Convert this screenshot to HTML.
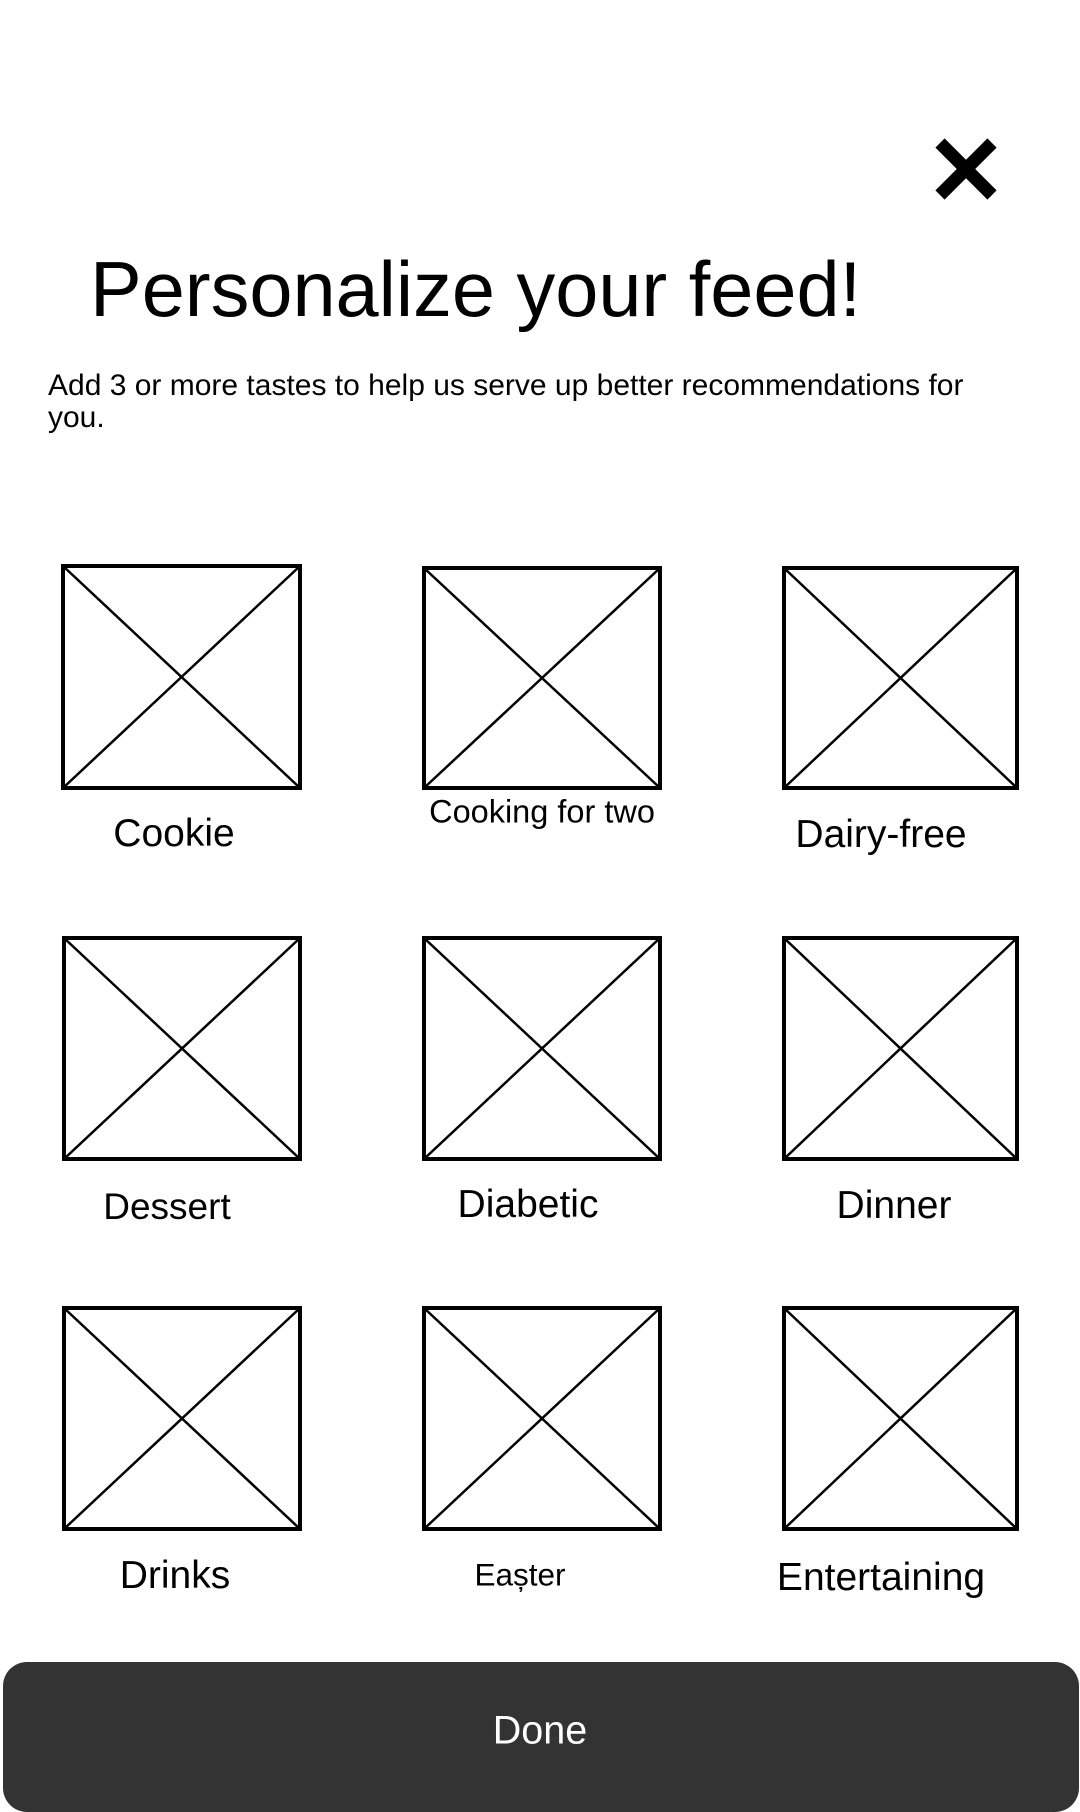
<!DOCTYPE html>
<html><head><meta charset="utf-8"><style>
html,body{margin:0;padding:0;background:#fff;}
body{width:1080px;height:1800px;position:relative;overflow:hidden;font-family:"Liberation Sans",Arial,sans-serif;color:#000;}
.a{position:absolute;}
.lbl{position:absolute;transform:translate(-50%,-50%);white-space:nowrap;font-size:39px;}
</style></head><body>
<svg class="a" style="left:932px;top:137px" width="68" height="64" viewBox="0 0 68 64"><path d="M8 6 L60 58 M60 6 L8 58" stroke="#000" stroke-width="13" stroke-linecap="butt"/></svg>
<div class="a" style="left:90px;top:246px;font-size:77.5px;line-height:88px;">Personalize your feed!</div>
<div class="a" style="left:48px;top:370px;font-size:30px;line-height:32px;width:960px;">Add 3 or more tastes to help us serve up better recommendations for you.</div>

<svg class="a" style="left:0;top:0" width="1080" height="1800">
<g fill="none" stroke="#000">
<g stroke-width="4"><rect x="63" y="566" width="237" height="222"/><rect x="424" y="568" width="236" height="220"/><rect x="784" y="568" width="233" height="220"/>
<rect x="64" y="938" width="236" height="221"/><rect x="424" y="938" width="236" height="221"/><rect x="784" y="938" width="233" height="221"/>
<rect x="64" y="1308" width="236" height="221"/><rect x="424" y="1308" width="236" height="221"/><rect x="784" y="1308" width="233" height="221"/></g>
<g stroke-width="2.5">
<path d="M63 566L300 788M300 566L63 788"/><path d="M424 568L660 788M660 568L424 788"/><path d="M784 568L1017 788M1017 568L784 788"/>
<path d="M64 938L300 1159M300 938L64 1159"/><path d="M424 938L660 1159M660 938L424 1159"/><path d="M784 938L1017 1159M1017 938L784 1159"/>
<path d="M64 1308L300 1529M300 1308L64 1529"/><path d="M424 1308L660 1529M660 1308L424 1529"/><path d="M784 1308L1017 1529M1017 1308L784 1529"/>
</g></g></svg>

<div class="lbl" style="left:174px;top:834px;">Cookie</div>
<div class="lbl" style="left:542px;top:812px;font-size:32.5px;">Cooking for two</div>
<div class="lbl" style="left:881px;top:835px;">Dairy-free</div>
<div class="lbl" style="left:167px;top:1207px;font-size:37px;">Dessert</div>
<div class="lbl" style="left:528px;top:1205px;">Diabetic</div>
<div class="lbl" style="left:894px;top:1206px;">Dinner</div>
<div class="lbl" style="left:175px;top:1576px;">Drinks</div>
<div class="lbl" style="left:520px;top:1575px;font-size:31.5px;">Eașter</div>
<div class="lbl" style="left:881px;top:1578px;">Entertaining</div>

<div class="a" style="left:3px;top:1662px;width:1076px;height:150px;background:#333;border-radius:24px;"></div>
<div class="lbl" style="left:540px;top:1731px;color:#fff;font-size:39.5px;">Done</div>
</body></html>
